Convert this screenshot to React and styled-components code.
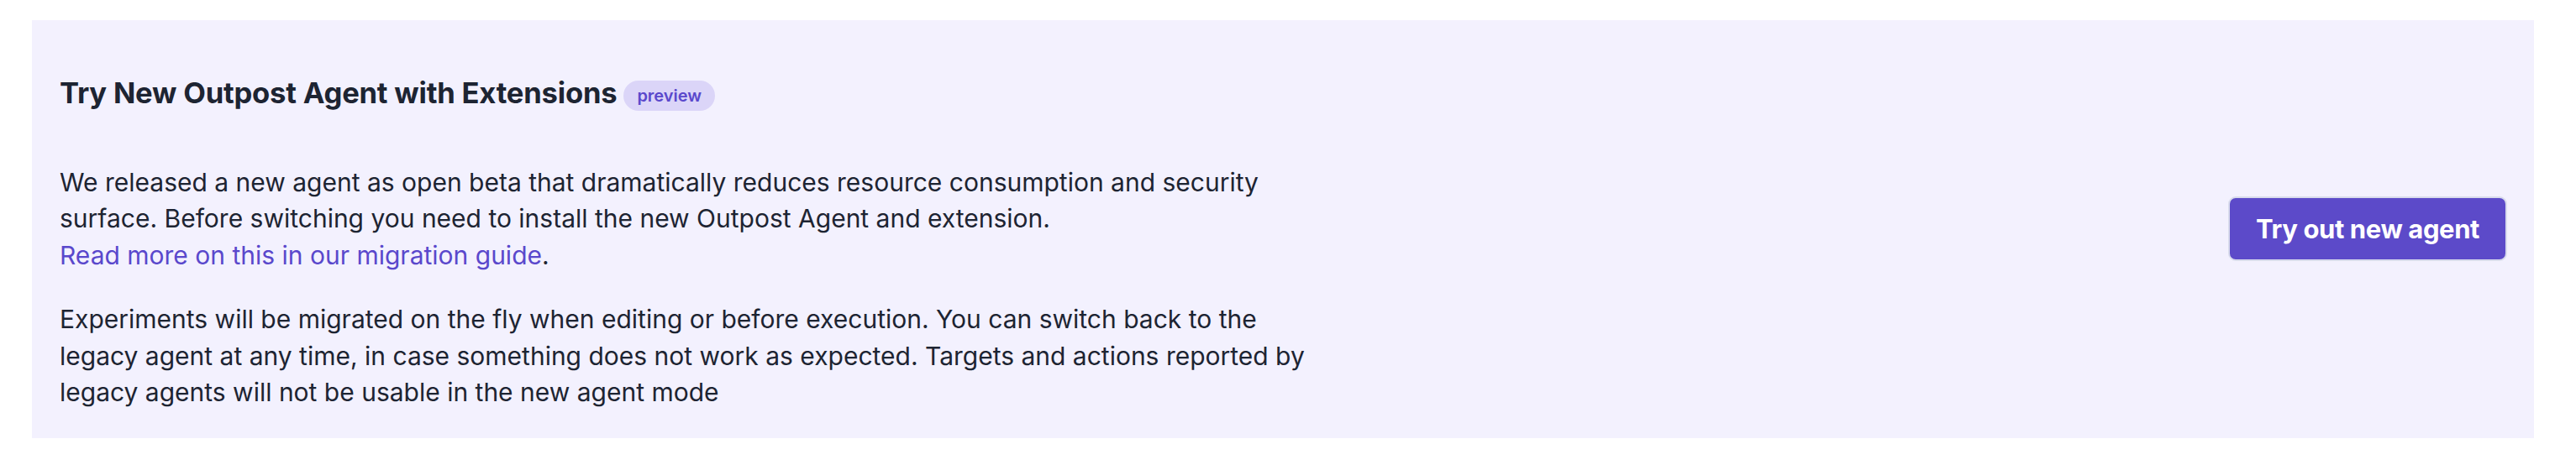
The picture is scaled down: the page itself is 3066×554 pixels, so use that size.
import React from "react";
import styled, { createGlobalStyle } from "styled-components";

const GlobalStyle = createGlobalStyle`
  html, body {
    margin: 0;
    padding: 0;
    background: #ffffff;
  }
  body {
    font-family: Inter, "Noto Sans", "Liberation Sans", sans-serif;
    -webkit-font-smoothing: antialiased;
  }
  * { box-sizing: border-box; }
`;

const Page = styled.div`
  padding: 24px 50px 0 38px;
`;

const Banner = styled.section`
  display: flex;
  align-items: center;
  justify-content: space-between;
  background: #f3f1fe;
  padding: 32px 32px 33px 33px;
`;

const Content = styled.div`
  display: flex;
  flex-direction: column;
  max-width: 1500px;
`;

const TitleRow = styled.div`
  display: flex;
  align-items: center;
  gap: 8px;
  height: 52px;
  margin: 28px 0 60px;
`;

const Title = styled.h3`
  margin: 0;
  font-size: 34.6px;
  line-height: 52px;
  font-weight: 700;
  color: #1d2432;
  letter-spacing: -0.2px;
`;

const Badge = styled.span`
  display: inline-flex;
  align-items: center;
  height: 36px;
  margin-top: 8px;
  padding: 0 16px;
  border-radius: 18px;
  background: #dbd5f8;
  color: #5a48cc;
  font-size: 20px;
  font-weight: 600;
`;

const Paragraph = styled.p`
  margin: 0;
  font-size: 30px;
  line-height: 43.4px;
  color: #1d2432;

  & + & {
    margin-top: 33px;
  }
`;

const Link = styled.a`
  color: #5a48cc;
  text-decoration: none;
`;

const Button = styled.button`
  display: inline-flex;
  align-items: center;
  justify-content: center;
  height: 77px;
  padding: 0 31px;
  border: 2px solid #d8dbec;
  border-radius: 9px;
  background: #5c4ac9;
  color: #ffffff;
  font-family: inherit;
  font-size: 31px;
  font-weight: 700;
  letter-spacing: -0.4px;
  white-space: nowrap;
  cursor: pointer;
  flex-shrink: 0;
`;

export default function App() {
  return (
    <>
      <GlobalStyle />
      <Page>
        <Banner>
          <Content>
            <TitleRow>
              <Title>Try New Outpost Agent with Extensions</Title>
              <Badge>preview</Badge>
            </TitleRow>
            <Paragraph>
              We released a new agent as open beta that dramatically reduces resource consumption and
              security surface. Before switching you need to install the new Outpost Agent and extension.
              <br />
              <Link href="#">Read more on this in our migration guide</Link>.
            </Paragraph>
            <Paragraph>
              Experiments will be migrated on the fly when editing or before execution. You can switch back
              to the legacy agent at any time, in case something does not work as expected. Targets and
              actions reported by legacy agents will not be usable in the new agent mode
            </Paragraph>
          </Content>
          <Button>Try out new agent</Button>
        </Banner>
      </Page>
    </>
  );
}
